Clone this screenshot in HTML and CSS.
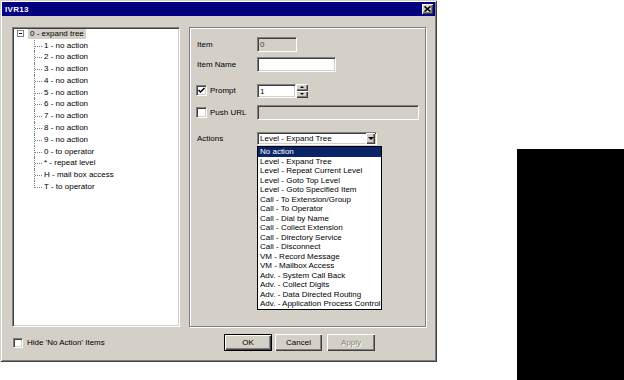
FILE: index.html
```html
<!DOCTYPE html>
<html lang="en">
<head>
  <meta charset="UTF-8">
  <title>IVR13</title>
  <link rel="stylesheet" href="styles.css">
</head>
<body>
  <div class="dialog">
    <div class="titlebar">
      <span class="title">IVR13</span>
      <span class="close">
        <svg width="7" height="6" viewBox="0 0 7 6"><path d="M0.5 0.5 L6.5 5.5 M6.5 0.5 L0.5 5.5" stroke="#000" stroke-width="1.6"/></svg>
      </span>
    </div>

    <div class="content">
      <div class="tree sunken">
        <div class="root">
          <span class="toggle"></span>
          <span class="sel">0 - expand tree</span>
        </div>
        <ul class="children">
          <li>1 - no action</li>
          <li>2 - no action</li>
          <li>3 - no action</li>
          <li>4 - no action</li>
          <li>5 - no action</li>
          <li>6 - no action</li>
          <li>7 - no action</li>
          <li>8 - no action</li>
          <li>9 - no action</li>
          <li>0 - to operator</li>
          <li>* - repeat level</li>
          <li>H - mail box access</li>
          <li>T - to operator</li>
        </ul>
      </div>

      <div class="panel">
        <div class="field">
          <span class="label">Item</span>
          <span class="box sunken disabled w-item">0</span>
        </div>
        <div class="field row-name">
          <span class="label">Item Name</span>
          <span class="box sunken w-name"></span>
        </div>
        <div class="field row-prompt">
          <span class="label chk-label"><span class="check sunken checked">
            <svg width="7" height="7" viewBox="0 0 7 7"><path d="M0.5 3 L2.5 5 L6.5 1" fill="none" stroke="#000" stroke-width="1.5"/></svg>
          </span>Prompt</span>
          <span class="box sunken w-prompt">1</span>
          <span class="spin">
            <span class="spin-btn raised"><i class="tri up"></i></span>
            <span class="spin-btn raised"><i class="tri down"></i></span>
          </span>
        </div>
        <div class="field row-url">
          <span class="label chk-label"><span class="check sunken"></span>Push URL</span>
          <span class="box sunken disabled w-url"></span>
        </div>
        <div class="field row-actions">
          <span class="label">Actions</span>
          <div class="combo sunken">
            <span class="combo-text">Level - Expand Tree</span>
            <span class="combo-btn raised"><i class="tri down big"></i></span>
            <ul class="droplist">
              <li class="hl">No action</li>
              <li>Level - Expand Tree</li>
              <li>Level - Repeat Current Level</li>
              <li>Level - Goto Top Level</li>
              <li>Level - Goto Specified Item</li>
              <li>Call - To Extension/Group</li>
              <li>Call - To Operator</li>
              <li>Call - Dial by Name</li>
              <li>Call - Collect Extension</li>
              <li>Call - Directory Service</li>
              <li>Call - Disconnect</li>
              <li>VM - Record Message</li>
              <li>VM - Mailbox Access</li>
              <li>Adv. - System Call Back</li>
              <li>Adv. - Collect Digits</li>
              <li>Adv. - Data Directed Routing</li>
              <li>Adv. - Application Process Control</li>
            </ul>
          </div>
        </div>
      </div>

      <div class="hide-row">
        <span class="check sunken small"></span>Hide 'No Action' Items
      </div>

      <div class="buttons">
        <span class="btn default">OK</span>
        <span class="btn cancel">Cancel</span>
        <span class="btn apply">Apply</span>
      </div>
    </div>
  </div>

  <div class="blackbox"></div>
</body>
</html>
```

FILE: styles.css
```css
body {
  margin: 0;
  height: 380px;
  background: #fff;
  display: flex;
  font-family: "Liberation Sans", Arial, sans-serif;
  font-size: 8px;
  color: #000;
  overflow: hidden;
}

/* window frame */
.dialog {
  box-sizing: border-box;
  width: 437px; height: 362px;
  padding: 2px;
  background: #d4d0c8;
  box-shadow: inset 1px 1px #d4d0c8, inset -1px -1px #404040,
              inset 2px 2px #fff, inset -2px -2px #808080;
  flex: none;
}
.titlebar {
  height: 14px;
  background: #000080;
  display: flex; align-items: center; justify-content: space-between;
  padding: 0 2px 0 3px;
}
.title { color: #fff; font-weight: bold; font-size: 8px; letter-spacing: 0.3px; }
.close {
  box-sizing: border-box;
  width: 11px; height: 10px;
  background: #d4d0c8;
  display: flex; align-items: center; justify-content: center;
  box-shadow: inset 1px 1px #fff, inset -1px -1px #404040, inset -2px -2px #808080;
}

/* 3d borders */
.sunken {
  box-sizing: border-box;
  border-top: 1px solid #808080; border-left: 1px solid #808080;
  border-bottom: 1px solid #fff; border-right: 1px solid #fff;
  box-shadow: inset 1px 1px #404040, inset -1px -1px #d4d0c8;
}
.raised {
  box-sizing: border-box;
  background: #d4d0c8;
  box-shadow: inset 1px 1px #fff, inset -1px -1px #404040, inset -2px -2px #808080;
}

.content {
  margin: 11px 0 0 10px;
  display: grid;
  grid-template-columns: 168px 237px;
  grid-template-rows: 300px 17px;
  column-gap: 9px; row-gap: 7px;
}

/* tree */
.tree { background: #fff; padding: 0 0 0 2px; }
.root { height: 11.5px; display: flex; align-items: center; }
.toggle {
  box-sizing: border-box;
  width: 7px; height: 7px; margin-left: 2px;
  border: 1px solid #808080;
  position: relative;
}
.toggle::after {
  content: ""; position: absolute;
  left: 1px; top: 2px; width: 3px; height: 1px; background: #000;
}
.sel { margin-left: 4px; padding: 0 2px; background: #d4d0c8; line-height: 10px; }
.children { list-style: none; margin: 0 0 0 19px; padding: 0; }
.children li {
  position: relative;
  height: 11.8px; line-height: 11.8px;
  padding-left: 10px;
}
.children li::before {
  content: ""; position: absolute;
  left: 1px; top: 6px; width: 7px;
  border-top: 1px dotted #808080;
}
.children li::after {
  content: ""; position: absolute;
  left: 0; top: 0; bottom: 0;
  border-left: 1px dotted #808080;
}
.children li:last-child::after { bottom: 5px; }

/* right panel */
.panel {
  box-sizing: border-box;
  border: 1px solid #808080;
  box-shadow: inset 1px 1px #fff, 1px 1px #fff;
  padding: 9px 0 0 6px;
}
.field { display: flex; align-items: center; height: 15px; }
.label { width: 61px; padding-left: 1px; box-sizing: border-box; flex: none; }
.chk-label { display: flex; align-items: center; padding-left: 0; }
.row-name { margin-top: 5px; }
.row-prompt { margin-top: 11px; }
.row-url { margin-top: 7px; }
.row-actions { margin-top: 12px; height: 13px; }

.box {
  height: 15px; background: #fff;
  padding-left: 2px; line-height: 13px;
}
.box.disabled { background: #d4d0c8; color: #404040; }
.w-item { width: 40px; }
.w-name { width: 79px; }
.w-prompt { width: 39px; height: 14px; }
.w-url { width: 162px; }

.check {
  width: 11px; height: 11px; background: #fff;
  margin-right: 3px; flex: none;
  display: flex; align-items: center; justify-content: center;
}
.check.small { width: 10px; height: 10px; }

.spin { display: flex; flex-direction: column; }
.spin-btn {
  width: 12px; height: 7px;
  display: flex; align-items: center; justify-content: center;
}
.tri { width: 0; height: 0; border-left: 2px solid transparent; border-right: 2px solid transparent; }
.tri.up { border-bottom: 2px solid #000; }
.tri.down { border-top: 2px solid #000; }
.tri.big { border-left-width: 3px; border-right-width: 3px; border-top-width: 3px; }

/* combo with open list */
.combo {
  position: relative;
  width: 120px; height: 13px;
  background: #fff;
  display: flex; align-items: center; justify-content: space-between;
}
.combo-text { padding-left: 2px; line-height: 11px; }
.combo-btn {
  width: 9px; height: 11px; margin-right: 1px;
  display: flex; align-items: center; justify-content: center;
}
.droplist {
  position: absolute;
  left: -1px; top: 13px;
  width: 125px;
  margin: 0; padding: 0; list-style: none;
  background: #fff;
  border: 1px solid #000;
  box-sizing: border-box;
}
.droplist li {
  height: 9.5px; line-height: 9.5px;
  padding-left: 2px;
  white-space: nowrap;
}
.droplist li.hl { background: #0a246a; color: #fff; }

/* bottom row */
.hide-row { display: flex; align-items: center; padding-left: 1px; }
.hide-row .check { margin-right: 4px; }
.buttons { display: flex; padding-left: 35px; }
.btn {
  box-sizing: border-box;
  width: 48px; height: 17px;
  background: #d4d0c8;
  display: flex; align-items: center; justify-content: center;
  box-shadow: inset 1px 1px #fff, inset -1px -1px #404040, inset -2px -2px #808080;
}
.btn.default {
  border: 1px solid #000;
}
.btn.cancel { width: 47px; margin-left: 3px; }
.btn.apply { margin-left: 5px; color: #808080; text-shadow: 1px 1px #fff; }

.blackbox {
  width: 107px; height: 231px;
  margin-left: 80px;
  align-self: flex-end;
  background: #000;
  flex: none;
}
```
